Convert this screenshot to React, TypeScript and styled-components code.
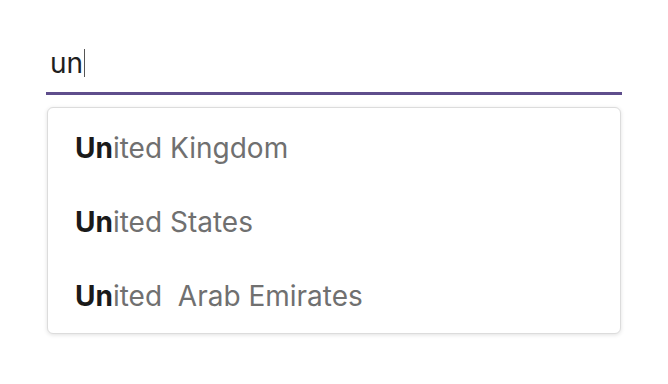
import styled, { createGlobalStyle } from "styled-components";

const Global = createGlobalStyle`
  html, body {
    margin: 0;
    padding: 0;
    background: #ffffff;
    font-family: Inter, "Noto Sans", sans-serif;
  }
`;

const Page = styled.div`
  width: 668px;
  height: 384px;
  padding: 38px 46px 0 46px;
  box-sizing: border-box;
`;

const Field = styled.div`
  width: 576px;
  height: 57px;
  box-sizing: border-box;
  border-bottom: 3px solid #5f4e8c;
  display: flex;
  align-items: center;
  padding: 0 0 4px 4px;
  font-size: 28px;
  color: #1f1f1f;
`;

const Caret = styled.span`
  display: inline-block;
  width: 1px;
  height: 28px;
  background: #555;
  margin-left: 1px;
`;

const Menu = styled.ul`
  list-style: none;
  margin: 12px 0 0 1px;
  padding: 3px 0 0 0;
  width: 574px;
  box-sizing: border-box;
  border: 1px solid #dcdcdc;
  border-radius: 6px;
  box-shadow: 0 1px 4px rgba(0, 0, 0, 0.12);
  background: #fff;
`;

const Option = styled.li`
  height: 74px;
  display: flex;
  align-items: center;
  padding-left: 27px;
  font-size: 28px;
  color: #707070;
  white-space: pre;
`;

const Match = styled.strong`
  font-weight: 700;
  color: #1a1a1a;
`;

const options = ["United Kingdom", "United States", "United  Arab Emirates"];

export default function App() {
  const query = "un";
  return (
    <Page>
      <Global />
      <Field>
        {query}
        <Caret />
      </Field>
      <Menu>
        {options.map((o) => (
          <Option key={o}>
            <Match>{o.slice(0, query.length)}</Match>
            {o.slice(query.length)}
          </Option>
        ))}
      </Menu>
    </Page>
  );
}
